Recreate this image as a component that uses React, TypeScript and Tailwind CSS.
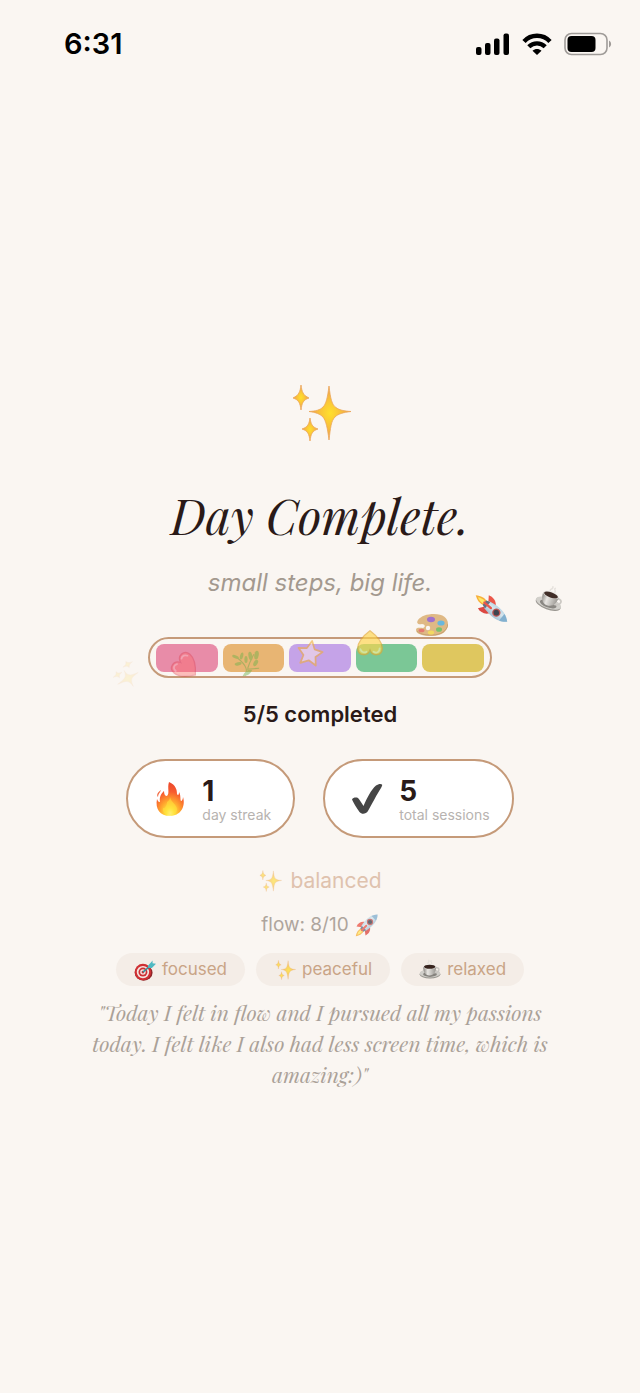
import type { ReactNode } from "react";
import clsx from "clsx";

interface IconProps {
  className?: string;
}

function Sparkles({ className }: IconProps) {
  return (
    <svg viewBox="0 0 64 64" className={className} aria-hidden="true">
      <defs>
        <radialGradient id="sparkle">
          <stop offset="0" stopColor="#ffe02c" />
          <stop offset="0.35" stopColor="#fbcb36" />
          <stop offset="1" stopColor="#f0a04a" />
        </radialGradient>
      </defs>
      <g fill="url(#sparkle)" stroke="#eba65a" strokeWidth="0.8" strokeLinejoin="round">
        <path d="M41 5C42.500 18 44 24 48 26.500C51 29 56 30 63 30.500C55 31.500 50 33 47 36C43 40 42.500 47 41 59C39.500 47 38 40 35 36C32 33 28 31.500 21 30.500C28 30 32 29 35 26C38 23 39.500 17 41 5Z" />
        <path d="M13 4C14 11 15 14 21 17C15 19 14 22 13 29C12 22 11 19 5 17C11 14 12 11 13 4Z" />
        <path d="M22 37C23 43 24 46 30 48C24 50 23 53 22 60C21 53 20 50 14 48C20 46 21 43 22 37Z" />
      </g>
    </svg>
  );
}

function Rocket({ className }: IconProps) {
  return (
    <svg viewBox="0 0 32 32" className={className} aria-hidden="true">
      <defs>
        <linearGradient id="rocketBody" x1="0" y1="0" x2="1" y2="1">
          <stop offset="0" stopColor="#5aa9d2" />
          <stop offset="0.45" stopColor="#d5e4ec" />
          <stop offset="1" stopColor="#4c8ab2" />
        </linearGradient>
      </defs>
      <path d="M9 20C4 22 2 26 1 31C6 30 10 28 12 23Z" fill="#f7a928" />
      <path d="M8 22C5 24 4 26 3 29C6 28 8 27 10 24Z" fill="#ffe85a" />
      <path d="M13 12C8 11 4 14 2 18L9 19Z" fill="#ea4638" />
      <path d="M20 19C21 24 18 28 14 30L13 23Z" fill="#d93630" />
      <path d="M30 2C22 2 15 7 8 18L14 24C25 17 30 10 30 2Z" fill="url(#rocketBody)" />
      <path d="M30 2C27 2 24 3 22 4L28 10C29.500 7 30 5 30 2Z" fill="#76a9cc" />
      <path d="M9 17L7 21L11 25L15 23Z" fill="#526377" />
      <circle cx="20" cy="12" r="4.200" fill="#b84543" />
      <circle cx="20" cy="12" r="2.800" fill="#29323f" />
      <path d="M9 23L15 17" stroke="#e8483b" strokeWidth="2.400" strokeLinecap="round" />
    </svg>
  );
}

function Coffee({ className }: IconProps) {
  return (
    <svg viewBox="0 0 32 32" className={className} aria-hidden="true">
      <defs>
        <linearGradient id="cup">
          <stop offset="0" stopColor="#85827d" />
          <stop offset="0.35" stopColor="#e8e6e2" />
          <stop offset="1" stopColor="#96938e" />
        </linearGradient>
      </defs>
      <path d="M14 8C10 5 17 5 14 1M18 8C21 5 15 4 18 2" fill="none" stroke="#e4e0db" strokeWidth="1.500" />
      <ellipse cx="16" cy="22" rx="15" ry="6.500" fill="#96938d" />
      <ellipse cx="16" cy="21" rx="15" ry="6" fill="#d0cec9" />
      <ellipse cx="16" cy="22" rx="10" ry="4" fill="#85827d" />
      <path d="M24 13C31 11 31 20 22 20" fill="none" stroke="#c9c6c1" strokeWidth="2" />
      <path d="M6 11C6 18 9 24 15 24C22 24 25 18 25 11Z" fill="url(#cup)" />
      <ellipse cx="15.500" cy="11" rx="9.500" ry="3.800" fill="#efede9" />
      <ellipse cx="15.500" cy="11.300" rx="8.300" ry="3" fill="#38241e" />
    </svg>
  );
}

function Flame({ className }: IconProps) {
  return (
    <svg viewBox="0 0 32 36" className={className} aria-hidden="true">
      <defs>
        <radialGradient id="flame" cx="0.5" cy="0.92" r="0.85">
          <stop offset="0" stopColor="#fffbb0" />
          <stop offset="0.18" stopColor="#ffe23d" />
          <stop offset="0.45" stopColor="#ffa12d" />
          <stop offset="0.75" stopColor="#f75c2f" />
          <stop offset="1" stopColor="#ee4c2d" />
        </radialGradient>
      </defs>
      <path
        d="M15 1C22 4 23 9 23 13C24 15 25 14 25 11C27 14 26 18 27 20C28 20 29 18 29 16C32 26 26 35 16 35C6 35 1 28 3 18C4 20 4 21 6 21C5 15 8 12 10 10C10 13 11 15 13 15C16 12 13 7 15 1Z"
        fill="url(#flame)"
      />
      <path d="M7 9C6 12 4 13 4 16C2 14 4 11 7 9Z" fill="#f26b44" />
      <path d="M16 16C17 21 23 24 23 28C23 32 20 34 16 34C11 34 8 31 9 27C11 28 13 24 13 21C14 20 16 19 16 16Z" fill="#ffe33d" opacity="0.55" />
    </svg>
  );
}

function Check({ className }: IconProps) {
  return (
    <svg viewBox="0 0 32 32" className={className} aria-hidden="true">
      <path d="M1 16.500C2 14.500 5 14 7 15C9 17 10.500 20 12.500 23C16 15 20 7 25 2.500C27 1 30 0.500 31 1.500C31.500 2 31 3 30 5C26 11 21 21 17 28C15 31 11 32 8.500 29C5.500 25 2.500 20 1 16.500Z" fill="#454545" />
    </svg>
  );
}

function Target({ className }: IconProps) {
  return (
    <svg viewBox="0 0 32 32" className={className} aria-hidden="true">
      <ellipse cx="14" cy="20" rx="13" ry="11.500" fill="#8e2528" />
      <circle cx="13" cy="19" r="12" fill="#cf3034" />
      <circle cx="13" cy="19" r="9" fill="#f4e5e0" />
      <circle cx="13" cy="19" r="6.500" fill="#cf3034" />
      <circle cx="13" cy="19" r="4" fill="#f4e5e0" />
      <circle cx="13" cy="19" r="2" fill="#cf3034" />
      <path d="M13 19L26 8" stroke="#35909c" strokeWidth="2.200" />
      <path d="M20 10L27 2L27 6L32 7L26 13L21 13Z" fill="#4fb9c2" />
    </svg>
  );
}

function Heart({ className }: IconProps) {
  return (
    <svg viewBox="0 0 32 32" className={className} aria-hidden="true">
      <path d="M16 30C8 24 2 17 2 10C2 1 13 0 16 8C19 0 30 1 30 10C30 17 24 24 16 30Z" fill="#ff6969" stroke="#e04050" strokeWidth="1.500" />
      <path d="M5 10C5 5 9 4 12 6M20 6C23 4 26 6 27 9" fill="none" stroke="#ffc4c4" strokeWidth="2" strokeLinecap="round" />
    </svg>
  );
}

function YellowHeart({ className }: IconProps) {
  return (
    <svg viewBox="0 0 32 32" className={className} aria-hidden="true">
      <path d="M16 30C8 24 2 17 2 10C2 1 13 0 16 8C19 0 30 1 30 10C30 17 24 24 16 30Z" fill="#ffd54a" stroke="#e5a82e" strokeWidth="1.500" />
      <path d="M5 10C5 5 9 4 12 6M20 6C23 4 26 6 27 9" fill="none" stroke="#fff3a8" strokeWidth="2" strokeLinecap="round" />
    </svg>
  );
}

function Herb({ className }: IconProps) {
  return (
    <svg viewBox="0 0 32 32" className={className} aria-hidden="true">
      <path d="M15 31C18 24 17 19 6 10M18 22C20 15 22 12 25 6M17 23C23 23 26 22 31 22" fill="none" stroke="#69a84a" strokeWidth="1.200" />
      <g fill="#6cb14b">
        <ellipse cx="4" cy="9" rx="4" ry="1.800" transform="rotate(20 4 9)" />
        <ellipse cx="7" cy="17" rx="4" ry="1.800" transform="rotate(-12 7 17)" />
        <ellipse cx="11" cy="8" rx="1.800" ry="4" transform="rotate(15 11 8)" />
        <ellipse cx="16" cy="12" rx="1.800" ry="4" />
        <ellipse cx="21" cy="8" rx="2.200" ry="5" transform="rotate(-10 21 8)" />
        <ellipse cx="28" cy="7" rx="2.500" ry="5" transform="rotate(10 28 7)" />
        <ellipse cx="27" cy="16" rx="2.200" ry="4" transform="rotate(30 27 16)" />
        <path d="M12 31C15 25 19 23 23 24C21 29 17 31 12 31Z" />
      </g>
    </svg>
  );
}

function Star({ className }: IconProps) {
  return (
    <svg viewBox="0 0 32 32" className={className} aria-hidden="true">
      <path d="M16 2L20.500 11L30 12.500L23 19.500L25 29L16 24.500L7 29L9 19.500L2 12.500L11.500 11Z" fill="#f4e0e8" stroke="#f0ad3c" strokeWidth="2" strokeLinejoin="round" />
    </svg>
  );
}

function Palette({ className }: IconProps) {
  return (
    <svg viewBox="0 0 32 22" className={className} aria-hidden="true">
      <path d="M18 0C27 0 32 4 32 10C32 17 26 22 16 22C7 22 0 20 0 16C0 13 4 14 7 14C10 13 9 10 6 10C2 11 0 9 2 6C5 2 11 0 18 0Z" fill="#d9ab6a" />
      <path d="M1 17C5 21 11 21 16 21C25 21 31 17 32 10" fill="none" stroke="#b98a50" strokeWidth="1" />
      <circle cx="12" cy="14" r="2.200" fill="#faf6f2" />
      <ellipse cx="15" cy="5.500" rx="4" ry="2.800" fill="#8950c4" />
      <ellipse cx="25" cy="9" rx="3.600" ry="2.600" fill="#45a9d8" />
      <ellipse cx="23" cy="15.500" rx="3" ry="2.300" fill="#5cb44b" />
      <ellipse cx="15" cy="18.500" rx="3.200" ry="2" fill="#f2d33f" />
      <ellipse cx="5.500" cy="16.500" rx="3" ry="1.800" fill="#e05a50" />
    </svg>
  );
}

function StatusBar() {
  return (
    <header className="flex h-20 items-center justify-between pt-2 pr-7 pl-16 text-black">
      <time className="text-[29px] leading-8 font-semibold">6:31</time>
      <div className="flex items-center gap-3">
        <svg viewBox="0 0 34 22" className="h-[22px] w-[34px]" aria-label="Signal">
          <rect x="0" y="14" width="5.500" height="8" rx="2" />
          <rect x="9" y="10" width="5.500" height="12" rx="2" />
          <rect x="18" y="5.500" width="5.500" height="16.500" rx="2" />
          <rect x="27.500" y="0.500" width="5.500" height="21.500" rx="2" />
        </svg>
        <svg viewBox="0 0 30 22" className="h-[22px] w-[30px]" aria-label="Wi-Fi">
          <g fill="none" stroke="#000" strokeWidth="4.400">
            <path d="M2 8.500C9 0.800 21 0.800 28 8.500" />
            <path d="M6.800 13.800C11.500 9.200 18.500 9.200 23.200 13.800" />
          </g>
          <path d="M10.500 17.800C13.300 15.300 16.700 15.300 19.500 17.800L15 22Z" />
        </svg>
        <svg viewBox="0 0 48 24" className="h-6 w-12" aria-label="Battery">
          <rect x="1" y="1.500" width="42" height="21" rx="6.500" fill="none" stroke="#9f9b98" strokeWidth="1.600" />
          <rect x="3.500" y="4" width="28" height="16" rx="4" />
          <path d="M45 8.500C47.800 10 47.800 14 45 15.500Z" fill="#9f9b98" />
        </svg>
      </div>
    </header>
  );
}

const segments = ["bg-[#e88ca8]", "bg-[#e8b573]", "bg-[#c5a3e8]", "bg-[#7bc796]", "bg-[#dfc75f]"];

// Trail of emoji drifting up and to the right across the bar
function EmojiTrail() {
  return (
    <div className="pointer-events-none absolute inset-0">
      <Sparkles className="absolute top-6 -left-9 size-7 rotate-60 opacity-15" />
      <Heart className="absolute top-4 left-6 size-7 -rotate-50 opacity-40" />
      <Herb className="absolute top-3 left-21 size-7 opacity-45" />
      <Star className="absolute top-0.5 left-37 size-7 rotate-10 opacity-60" />
      <YellowHeart className="absolute -top-2 left-52 size-7 rotate-180 opacity-65" />
      <Palette className="absolute -top-6 left-67 h-6 w-8 opacity-80" />
      <Rocket className="absolute -top-11 left-82 size-8 rotate-85 opacity-90" />
      <Coffee className="absolute -top-13 left-97 size-7 rotate-20 opacity-95" />
    </div>
  );
}

function StatCard({ icon, value, label }: { icon: ReactNode; value: number; label: string }) {
  return (
    <div className="flex h-[79px] items-center gap-4 rounded-full border-2 border-[#c59a79] bg-white pr-[22px] pl-[26px]">
      {icon}
      <div>
        <p className="text-[28px] leading-8 font-bold text-[#2a1a18]">{value}</p>
        <p className="text-sm leading-4 text-[#b7b3b0]">{label}</p>
      </div>
    </div>
  );
}

const moods = [
  { label: "focused", icon: Target },
  { label: "peaceful", icon: Sparkles },
  { label: "relaxed", icon: Coffee },
];

export default function App() {
  return (
    <div className="flex min-h-screen flex-col bg-[#faf6f2] font-['Inter',sans-serif]">
      <StatusBar />
      <main className="flex flex-1 flex-col items-center justify-center px-8 pb-0.5 text-center">
        <Sparkles className="size-16" />
        <h1 className="mt-10 font-['Playfair_Display','Liberation_Serif',serif] text-5xl leading-[60px] text-[#2a1a18] italic">
          Day Complete.
        </h1>
        <p className="mt-[22px] text-2xl leading-8 text-[#a3998f] italic">small steps, big life.</p>

        <div className="relative mt-[38px] w-full max-w-[344px]">
          <div className="flex h-[41px] items-center gap-[5px] rounded-full border-2 border-[#c59a79] px-1.5">
            {segments.map((color) => (
              <div key={color} className={clsx("h-7 flex-1 rounded-lg", color)} />
            ))}
          </div>
          <EmojiTrail />
        </div>
        <p className="mt-[22px] text-[22px] leading-7 font-semibold text-[#2a1a18]">5/5 completed</p>

        <div className="mt-[31px] flex gap-7 text-left">
          <StatCard icon={<Flame className="h-9 w-8" />} value={1} label="day streak" />
          <StatCard icon={<Check className="size-8" />} value={5} label="total sessions" />
        </div>

        <p className="mt-[29px] flex items-center gap-2 text-[21px] leading-7 text-[#dfc2ae]">
          <Sparkles className="size-6 opacity-60" />
          balanced
        </p>
        <p className="mt-[18px] flex items-center gap-1.5 text-[19px] leading-6 text-[#aea59d]">
          flow: 8/10
          <Rocket className="size-6 opacity-70" />
        </p>

        <ul className="mt-4 flex gap-[11px]">
          {moods.map(({ label, icon: Icon }) => (
            <li key={label} className="flex h-[33px] items-center gap-1.5 rounded-full bg-[#f4ede7] px-[18px] text-[17px] text-[#c9a486]">
              <Icon className={clsx("size-[22px]", label === "peaceful" && "opacity-75")} />
              {label}
            </li>
          ))}
        </ul>

        <blockquote className="mt-[11px] max-w-[464px] font-['Playfair_Display','Liberation_Serif',serif] text-[21px] leading-[31px] text-[#aaa198] italic">
          "Today I felt in flow and I pursued all my passions today. I felt like I also had less screen time, which is
          amazing:)"
        </blockquote>
      </main>
    </div>
  );
}
